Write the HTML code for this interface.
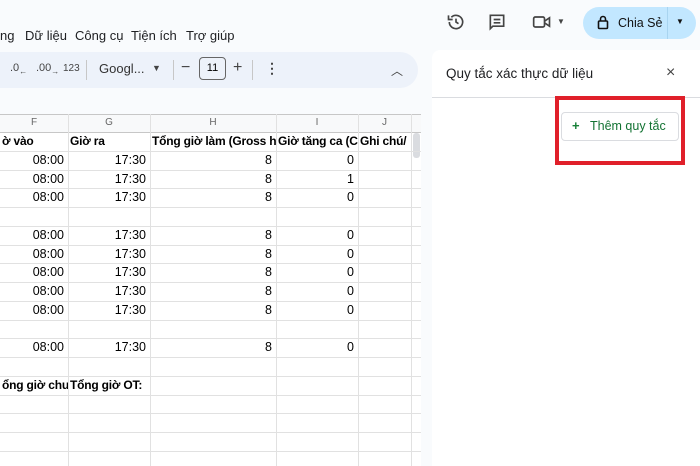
<!DOCTYPE html><html><head><meta charset="utf-8"><style>
body{margin:0;width:700px;height:466px;overflow:hidden;background:#f9fbfd;font-family:"Liberation Sans",sans-serif;position:relative}
.a{position:absolute}
.menu{top:28px;font-size:13px;color:#202124}
.tb{left:-20px;top:52px;width:438px;height:36px;background:#edf2fa;border-radius:18px}
.t{font-size:11px;color:#444}
.grid{left:0;top:114px;width:421px;height:352px;background:#fff;overflow:hidden}
.c{position:absolute;font-size:12.5px;color:#000;height:19px;line-height:19px;white-space:nowrap;overflow:hidden}
.vl{position:absolute;top:0;bottom:0;width:1px;background:#e1e1e1}
.hl{position:absolute;left:0;right:0;height:1px;background:#e1e1e1}
</style></head><body>
<div class="a menu" style="left:0">ng</div>
<div class="a menu" style="left:25px">Dữ liệu</div>
<div class="a menu" style="left:75px">Công cụ</div>
<div class="a menu" style="left:131px">Tiện ích</div>
<div class="a menu" style="left:186px">Trợ giúp</div>
<div class="a tb"></div>
<div class="a t" style="left:10px;top:62px">.0<sub style="font-size:8px">←</sub></div>
<div class="a t" style="left:36px;top:62px">.00<sub style="font-size:8px">→</sub></div>
<div class="a t" style="left:63px;top:63px;font-size:10px">123</div>
<div class="a" style="left:86px;top:60px;width:1px;height:20px;background:#c7c7c7"></div>
<div class="a" style="left:99px;top:61px;font-size:13px;color:#333">Googl...</div>
<div class="a" style="left:152px;top:63px;font-size:9px;color:#444">▼</div>
<div class="a" style="left:173px;top:60px;width:1px;height:20px;background:#c7c7c7"></div>
<div class="a" style="left:181px;top:59px;font-size:16px;color:#444">−</div>
<div class="a" style="left:199px;top:57px;width:25px;height:21px;border:1px solid #666;border-radius:4px;font-size:11px;text-align:center;line-height:21px">11</div>
<div class="a" style="left:233px;top:59px;font-size:16px;color:#444">+</div>
<div class="a" style="left:252px;top:60px;width:1px;height:20px;background:#c7c7c7"></div>
<div class="a" style="left:265px;top:60px;font-size:14px;font-weight:bold;color:#444">⋮</div>
<div class="a" style="left:391px;top:62px;font-size:12px;color:#444">︿</div>
<svg class="a" style="left:446px;top:12px" width="20" height="20" viewBox="0 0 24 24" fill="none" stroke="#444" stroke-width="2"><path d="M4 12a8 8 0 1 0 2.4-5.7"/><path d="M3 4v5h5" /><path d="M12 8v4l3 2"/></svg>
<svg class="a" style="left:487px;top:12px" width="20" height="20" viewBox="0 0 24 24" fill="none" stroke="#444" stroke-width="2"><path d="M4 4h16v13H7l-3 3z"/><path d="M8 9h8M8 13h8"/></svg>
<svg class="a" style="left:532px;top:13px" width="20" height="18" viewBox="0 0 24 20" fill="none" stroke="#444" stroke-width="2"><rect x="2" y="4" width="13" height="12" rx="2"/><path d="M15 9l6-4v10l-6-4"/></svg>
<div class="a" style="left:557px;top:17px;font-size:8px;color:#444">▼</div>
<div class="a" style="left:583px;top:7px;width:113px;height:32px;background:#c2e7ff;border-radius:16px"></div>
<div class="a" style="left:667px;top:7px;width:1px;height:32px;background:#a8d4f0"></div>
<svg class="a" style="left:597px;top:15px" width="12" height="15" viewBox="0 0 12 15" fill="none" stroke="#111" stroke-width="1.6"><rect x="1.5" y="6" width="9" height="7.5" rx="1"/><path d="M3.5 6V4a2.5 2.5 0 0 1 5 0v2"/></svg>
<div class="a" style="left:618px;top:16px;font-size:12.5px;color:#111">Chia Sẻ</div>
<div class="a" style="left:676px;top:17px;font-size:8px;color:#111">▼</div>
<div class="a" style="left:432px;top:50px;width:268px;height:416px;background:#fff;border-radius:8px 0 0 0"></div>
<div class="a" style="left:446px;top:66px;font-size:13.5px;color:#202124">Quy tắc xác thực dữ liệu</div>
<div class="a" style="left:666px;top:64px;font-size:16px;color:#444">×</div>
<div class="a" style="left:432px;top:97px;width:268px;height:1px;background:#dadce0"></div>
<div class="a" style="left:561px;top:112px;width:116px;height:27px;border:1px solid #dadce0;border-radius:4px;background:#fff"></div>
<div class="a" style="left:572px;top:118px;font-size:13px;color:#188038;font-weight:bold">+</div>
<div class="a" style="left:590px;top:119px;font-size:12.5px;color:#137333">Thêm quy tắc</div>
<div class="a" style="left:555px;top:96px;width:122px;height:61px;border:4px solid #e0202a"></div>
<div class="a grid">
<div class="hl" style="top:0;background:#c7c7c7"></div>
<div class="hl" style="top:18px;background:#c7c7c7"></div>
<div style="position:absolute;top:1px;left:0;right:0;height:17px;background:#f8f9fa"></div>
<div class="c" style="left:0;width:68px;top:0;font-size:10px;color:#666;text-align:center;height:18px;line-height:18px">F</div>
<div class="c" style="left:68px;width:82px;top:0;font-size:10px;color:#666;text-align:center;height:18px;line-height:18px">G</div>
<div class="c" style="left:150px;width:126px;top:0;font-size:10px;color:#666;text-align:center;height:18px;line-height:18px">H</div>
<div class="c" style="left:276px;width:82px;top:0;font-size:10px;color:#666;text-align:center;height:18px;line-height:18px">I</div>
<div class="c" style="left:358px;width:53px;top:0;font-size:10px;color:#666;text-align:center;height:18px;line-height:18px">J</div>
<div class="vl" style="left:68px"></div><div class="vl" style="left:150px"></div><div class="vl" style="left:276px"></div><div class="vl" style="left:358px"></div><div class="vl" style="left:411px"></div>
<div style="position:absolute;left:413px;top:19px;width:7px;height:25px;background:#dadce0;border-radius:3px"></div>
</div>
<script>
var g=document.querySelector('.grid'),h='';
var rows=[['ờ vào','Giờ ra','Tổng giờ làm (Gross h','Giờ tăng ca (C','Ghi chú/','b'],
['08:00','17:30','8','0'],['08:00','17:30','8','1'],['08:00','17:30','8','0'],[],
['08:00','17:30','8','0'],['08:00','17:30','8','0'],['08:00','17:30','8','0'],['08:00','17:30','8','0'],['08:00','17:30','8','0'],[],
['08:00','17:30','8','0'],[],['ổng giờ chuẩ','Tổng giờ OT:','','','','b'],[],[],[],[],[]];
var L=[0,68,150,276,358],W=[68,82,126,82,53];
for(var i=0;i<rows.length;i++){var y=18+i*18.75;h+='<div class="hl" style="top:'+(y+18.75).toFixed(1)+'px"></div>';
var r=rows[i],b=r[5]=='b';for(var j=0;j<5;j++){if(!r[j])continue;
h+='<div class="c" style="left:'+(L[j]+2)+'px;width:'+(W[j]-(b?2:6))+'px;top:'+y.toFixed(1)+'px;'+(b?'font-weight:bold;font-size:12px;text-align:left;letter-spacing:-0.2px':'text-align:right')+'">'+r[j]+'</div>';}}
g.insertAdjacentHTML('beforeend',h);
</script>
</body></html>
